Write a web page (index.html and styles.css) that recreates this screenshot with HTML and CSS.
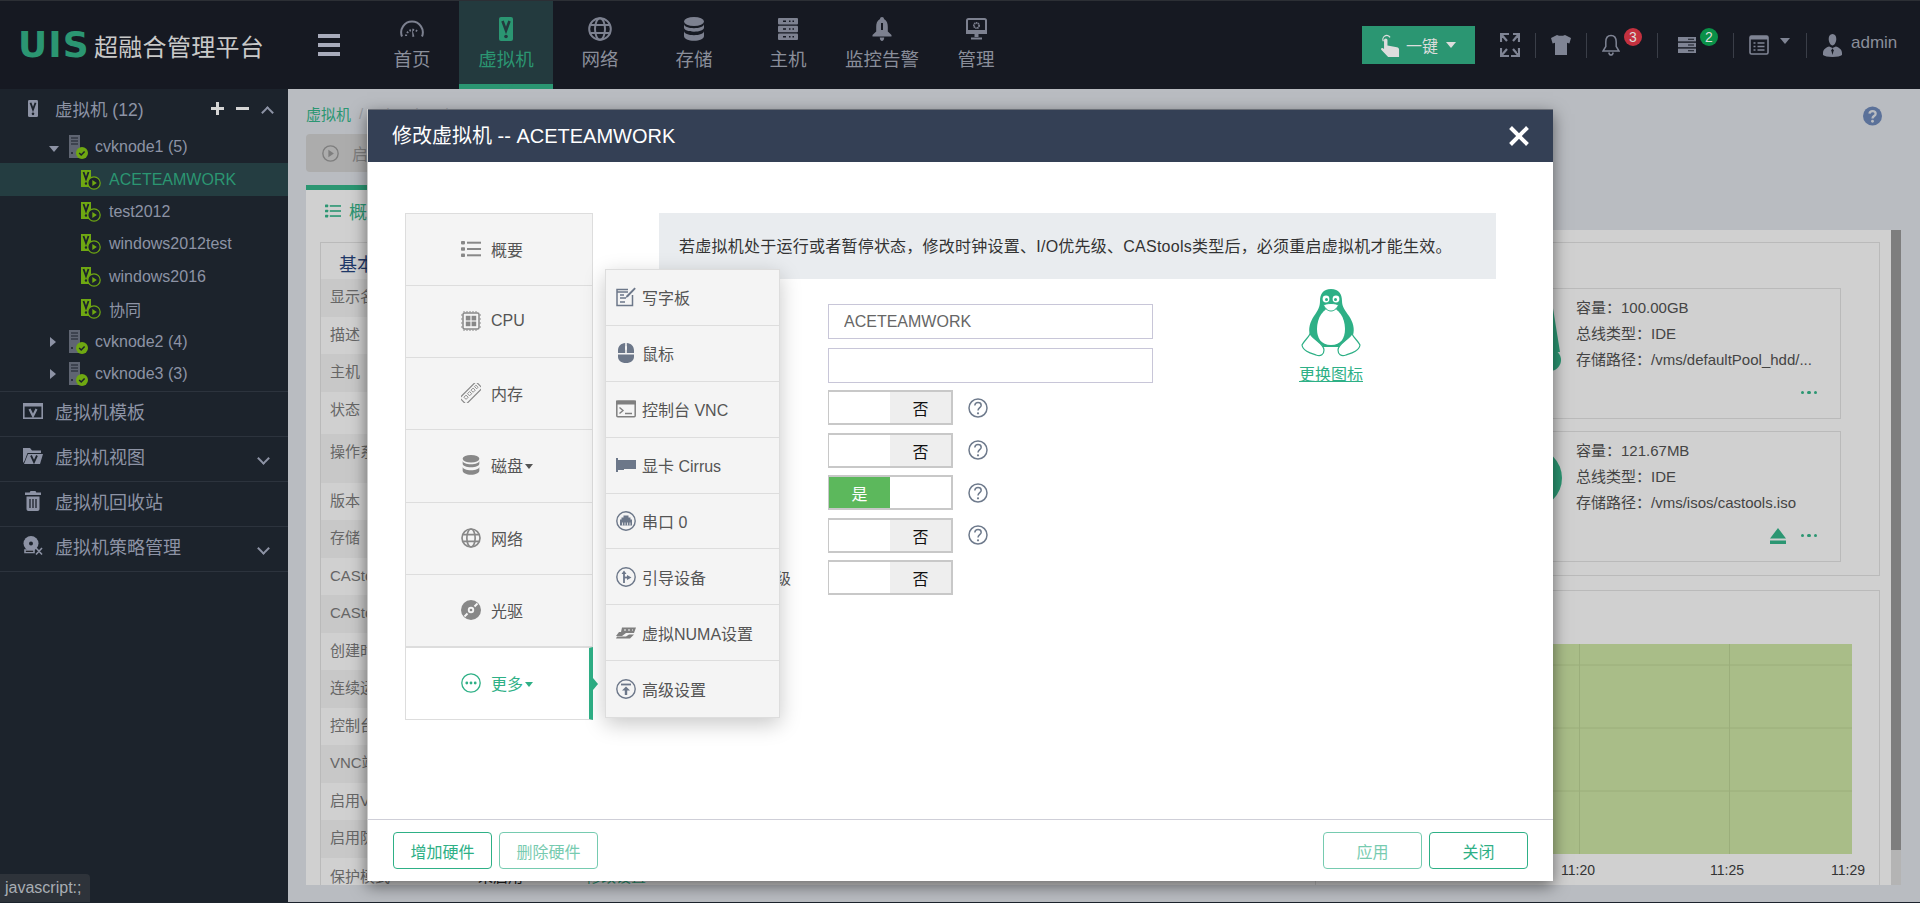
FILE: index.html
```html
<!DOCTYPE html>
<html lang="zh-CN">
<head>
<meta charset="utf-8">
<title>UIS 超融合管理平台</title>
<link rel="stylesheet" href="styles.css">
</head>
<body>
<svg class="defs" width="0" height="0" aria-hidden="true">
  <symbol id="s-vm" viewBox="0 0 14 24"><rect x="0" y="0" width="14" height="24" rx="2" fill="currentColor"/><polyline points="3.5,4 7,13.5 10.5,4" fill="none" stroke="var(--cut)" stroke-width="2.6"/><circle cx="7" cy="19.5" r="1.8" fill="var(--cut)"/></symbol>
  <symbol id="s-gauge" viewBox="0 0 24 16"><path d="M2 15.5A10.8 10.8 0 1 1 22 15.5" fill="none" stroke="currentColor" stroke-width="2"/><path d="M6 15A7 7 0 0 1 18 11" fill="none" stroke="currentColor" stroke-width="2" stroke-dasharray="1.6 1.6"/><path d="M12 7l2.4 8.500-2 .5z" fill="currentColor"/></symbol>
  <symbol id="s-globe" viewBox="0 0 24 24"><g fill="none" stroke="currentColor" stroke-width="2"><circle cx="12" cy="12" r="10.800"/><ellipse cx="12" cy="12" rx="5" ry="10.800"/><path d="M2.500 8h19M2.500 16h19"/></g></symbol>
  <symbol id="s-db" viewBox="0 0 20 24"><g fill="currentColor"><ellipse cx="10" cy="4.500" rx="10" ry="4.500"/><path d="M0 7v3.500c0 2.500 4.500 4.200 10 4.200s10-1.700 10-4.200V7c0 2.500-4.500 4.200-10 4.200S0 9.500 0 7z"/><path d="M0 14v5c0 2.800 4.500 4.800 10 4.800s10-2 10-4.800v-5c0 2.500-4.500 4.200-10 4.200S0 16.500 0 14z"/></g></symbol>
  <symbol id="s-server" viewBox="0 0 20 22"><g fill="currentColor"><rect width="20" height="6.400" rx="1"/><rect y="7.800" width="20" height="6.400" rx="1"/><rect y="15.600" width="20" height="6.400" rx="1"/></g><path d="M5 3.200h3M11 3.200h1.500M14.500 3.200h1.500M5 11h3M11 11h1.500M14.500 11h1.500M5 18.800h3M11 18.800h1.500M14.500 18.800h1.500" stroke="var(--cut)" stroke-width="1.600"/></symbol>
  <symbol id="s-bellf" viewBox="0 0 20 24"><path fill="currentColor" d="M10 0c1.200 0 2 .9 2 2 3 1.700 3.800 4.500 3.800 8v4.500L19.500 18v1.500h-19V18l3.700-3.500V10c0-3.500.8-6.300 3.800-8 0-1.100.8-2 2-2zM7.800 20.500h4.400c0 2-1 3.500-2.200 3.500s-2.200-1.500-2.200-3.500z"/><rect x="9" y="6" width="2" height="7" fill="var(--cut)"/></symbol>
  <symbol id="s-monitor" viewBox="0 0 21 22"><rect x="1" y="1" width="19" height="14" rx="1.500" fill="none" stroke="currentColor" stroke-width="2"/><rect y="12" width="21" height="4" fill="currentColor"/><rect x="8.500" y="16" width="4" height="3" fill="currentColor"/><rect x="5" y="19.500" width="11" height="2" fill="currentColor"/><circle cx="10.500" cy="7.500" r="2.600" fill="none" stroke="currentColor" stroke-width="1.800" stroke-dasharray="1.400 .5"/></symbol>
  <symbol id="s-hand" viewBox="0 0 20 24"><g fill="none" stroke="currentColor" stroke-width="1.300"><path d="M2.500 7.500a4 4 0 0 1 7-4"/></g><path fill="currentColor" d="M5 4.500c1 0 1.800.8 1.800 1.800V12l10 1.800c1.300.3 2.200 1.300 2.200 2.500V24H7.500L.3 16.500c-.8-1 .5-2.400 1.700-1.600l1.200.9V6.300c0-1 .8-1.800 1.800-1.800z"/></symbol>
  <symbol id="s-expand" viewBox="0 0 20 24"><path d="M1 9V1h8M19 9V1h-6M1 15v8h8M19 15v8h-8M1 1l6 7M19 1l-6 7M1 23l6-7M19 23l-6-7" fill="none" stroke="currentColor" stroke-width="2.200"/></symbol>
  <symbol id="s-shirt" viewBox="0 0 20 20"><path fill="currentColor" d="M6 0l2 .8h4L14 0l6 3-1.600 5.600-2.400-.8V20H4V7.800l-2.400.8L0 3z"/></symbol>
  <symbol id="s-bell" viewBox="0 0 18 22"><path d="M9 1.500c-3.700 0-5.200 3-5.200 6.500v4.500L1 17h16l-2.800-4.500V8c0-3.500-1.500-6.500-5.200-6.500zM6.800 18.500c.3 1.700 1.200 2.500 2.200 2.500s1.900-.8 2.200-2.500" fill="none" stroke="currentColor" stroke-width="1.500"/></symbol>
  <symbol id="s-stack" viewBox="0 0 18 16"><g fill="currentColor"><rect width="18" height="4.400"/><rect y="5.800" width="18" height="4.400"/><rect y="11.600" width="18" height="4.400"/></g><path d="M10 2.200h6M10 8h6M10 13.800h6" stroke="var(--cut)" stroke-width="1.100"/></symbol>
  <symbol id="s-winlist" viewBox="0 0 20 20"><rect x="1" y="1" width="18" height="18" rx="1.500" fill="none" stroke="currentColor" stroke-width="1.600"/><rect x="1" y="1" width="18" height="3.500" fill="currentColor"/><path d="M4.500 8h2M8.500 8h7M4.500 11.500h2M8.500 11.500h7M4.500 15h2M8.500 15h7" stroke="currentColor" stroke-width="1.300"/></symbol>
  <symbol id="s-user" viewBox="0 0 20 24"><path fill="currentColor" d="M10 0c2.800 0 4 2.300 4 5.200S12.200 12 10 12 6 8.100 6 5.200 7.200 0 10 0zM6.500 13l3.500 1.500L13.500 13c3 .8 6.500 3 6.500 7v2c-1.500 1.300-5 2-10 2s-8.500-.7-10-2v-2c0-4 3.500-6.200 6.500-7z"/><path d="M10 15l-1.300 2 1.300 5 1.300-5z" fill="var(--cut)"/></symbol>
  <symbol id="s-help-f" viewBox="0 0 20 20"><circle cx="10" cy="10" r="10" fill="currentColor"/><path d="M6.800 7.500C7 5.500 8.300 4.800 10 4.800c1.900 0 3.300 1 3.300 2.700 0 2.500-3.300 2.500-3.300 5" fill="none" stroke="#b9bcc1" stroke-width="2.400"/><circle cx="10" cy="15.500" r="1.500" fill="#b9bcc1"/></symbol>
  <symbol id="s-play" viewBox="0 0 20 20"><circle cx="10" cy="10" r="9" fill="none" stroke="currentColor" stroke-width="1.600"/><path d="M7.500 5.500l6.500 4.500-6.500 4.500z" fill="currentColor"/></symbol>
  <symbol id="s-node" viewBox="0 0 20 24"><path fill="currentColor" d="M1 0h11v23H1z"/><path d="M3 3h7M3 6h7M3 9h7" stroke="var(--cut)" stroke-width="1.200"/><circle cx="4" cy="18" r="1" fill="var(--cut)"/><circle cx="14" cy="18" r="6" fill="#6fa812"/><path d="M11.200 18l2 2 3.400-3.600" fill="none" stroke="#1c232c" stroke-width="1.500"/></symbol>
  <symbol id="s-leaf" viewBox="0 0 20 20"><rect width="10" height="17" fill="#6fa812"/><polyline points="2.500,2 5,9 7.500,2" fill="none" stroke="#1c232c" stroke-width="1.800"/><circle cx="5" cy="13.500" r="1.200" fill="#1c232c"/><circle cx="13" cy="13" r="6.200" fill="#1c232c" stroke="#6fa812" stroke-width="1.200"/><path d="M11.300 10l4.500 3-4.500 3z" fill="#6fa812"/></symbol>
  <symbol id="s-tpl" viewBox="0 0 20 16"><rect x=".8" y=".8" width="18.400" height="14.400" fill="none" stroke="currentColor" stroke-width="1.600"/><rect y="0" width="20" height="3.500" fill="currentColor"/><polyline points="6.500,6 10,13 13.500,6" fill="none" stroke="currentColor" stroke-width="2.200"/></symbol>
  <symbol id="s-folder" viewBox="0 0 20 16"><path fill="currentColor" d="M0 0h7l2 2.500h9V5H4.500L1.500 13 0 15z"/><path fill="currentColor" d="M5 6h15l-3 10H1z"/><polyline points="8,7.500 11,14 14,7.500" fill="none" stroke="#1c232c" stroke-width="1.800"/></symbol>
  <symbol id="s-trash" viewBox="0 0 16 20"><path fill="currentColor" d="M5.500 0h5l.8 1.500H16v2.500H0V1.500h4.700zM1.500 5.500h13V18c0 1.200-.8 2-2 2h-9c-1.200 0-2-.8-2-2z"/><path d="M5 8v9M8 8v9M11 8v9" stroke="#1c232c" stroke-width="1.300"/></symbol>
  <symbol id="s-policy" viewBox="0 0 20 20"><circle cx="8" cy="7.500" r="7.500" fill="currentColor"/><circle cx="8" cy="7.500" r="2" fill="#1c232c"/><path d="M2 14h9v2.500H2zM13 12l6 6.500M19 12l-6 6.500" stroke="currentColor" stroke-width="1.600"/></symbol>
  <symbol id="s-list" viewBox="0 0 20 16"><g fill="currentColor"><rect y="0" width="4" height="3.400" rx=".8"/><rect y="6.300" width="4" height="3.400" rx=".8"/><rect y="12.600" width="4" height="3.400" rx=".8"/><rect x="6" y=".7" width="14" height="2"/><rect x="6" y="7" width="14" height="2"/><rect x="6" y="13.300" width="14" height="2"/></g></symbol>
  <symbol id="s-cpu" viewBox="0 0 20 20"><rect x="2" y="2" width="16" height="16" rx="1.500" fill="none" stroke="currentColor" stroke-width="1.500"/><g fill="currentColor"><rect x="4.800" y="4.800" width="4.600" height="4.600"/><rect x="10.600" y="4.800" width="4.600" height="4.600"/><rect x="4.800" y="10.600" width="4.600" height="4.600"/><rect x="10.600" y="10.600" width="4.600" height="4.600"/></g><path d="M3 0v1.500M6 0v1.500M9 0v1.500M12 0v1.500M15 0v1.500M3 18.500v1.500M6 18.500v1.500M9 18.500v1.500M12 18.500v1.500M15 18.500v1.500M0 4h1.500M0 8h1.500M0 12h1.500M0 16h1.500M18.500 4h1.500M18.500 8h1.500M18.500 12h1.500M18.500 16h1.500" stroke="currentColor"/></symbol>
  <symbol id="s-mem" viewBox="0 0 20 20"><g transform="rotate(-45 10 10)"><rect x="-1.500" y="5.500" width="23" height="9" fill="none" stroke="currentColor" stroke-width="1.200"/><path d="M2 8h3v3H2zM7 8h3v3H7zM12 8h3v3h-3zM17 8h2v3h-2z" fill="none" stroke="currentColor" stroke-width=".9"/></g></symbol>
  <symbol id="s-cd" viewBox="0 0 20 20"><circle cx="10" cy="10" r="10" fill="currentColor"/><circle cx="10" cy="10" r="3.200" fill="#f4f4f4"/><circle cx="10" cy="10" r="1.300" fill="currentColor"/><path d="M13.500 6.500l3-3M6.500 13.500l-3 3" stroke="#f4f4f4" stroke-width="2"/></symbol>
  <symbol id="s-more" viewBox="0 0 20 20"><circle cx="10" cy="10" r="9.200" fill="none" stroke="currentColor" stroke-width="1.300"/><circle cx="5.800" cy="10" r="1.400" fill="currentColor"/><circle cx="10" cy="10" r="1.400" fill="currentColor"/><circle cx="14.200" cy="10" r="1.400" fill="currentColor"/></symbol>
  <symbol id="s-edit" viewBox="0 0 20 20"><path d="M16.500 8v10.500h-15.500v-16h11" fill="none" stroke="currentColor" stroke-width="1.500"/><path d="M1 5h11" stroke="currentColor" stroke-width="1.500"/><path d="M4 8h4M4 11h6M4 15h5" stroke="currentColor" stroke-width="1.400"/><path d="M18.500 .5l1.300 1.300-7.800 8.200-2.500 1 1-2.500z" fill="currentColor"/></symbol>
  <symbol id="s-mouse" viewBox="0 0 16 20"><path fill="currentColor" d="M0 11.500h16v2c0 4-3 6.500-8 6.500s-8-2.500-8-6.500zM7.200 0v10H0V7.500C0 3 3 .3 7.200 0zM8.800 0C13 .3 16 3 16 7.500V10H8.800z"/><rect x="7" y="3" width="2" height="4" rx="1" fill="#f4f4f4"/></symbol>
  <symbol id="s-console" viewBox="0 0 20 17"><rect x=".8" y=".8" width="18.400" height="15.400" rx="1" fill="none" stroke="currentColor" stroke-width="1.500"/><rect width="20" height="4" fill="currentColor"/><path d="M3.500 7l3.500 3-3.500 3M9 13h7" fill="none" stroke="currentColor" stroke-width="1.400"/></symbol>
  <symbol id="s-gpu" viewBox="0 0 20 14"><path fill="currentColor" d="M0 0h2v2h18v9H8v1H2v2H0z"/></symbol>
  <symbol id="s-serial" viewBox="0 0 20 20"><circle cx="10" cy="10" r="9.200" fill="none" stroke="currentColor" stroke-width="1.400"/><path fill="currentColor" d="M7.500 4.500h5v2h2v2h1.500v6h-12v-6h1.500v-2h2z"/><path d="M6.500 11.500v3M9 11.500v3M11.500 11.500v3M14 11.500v3" stroke="#f4f4f4" stroke-width=".8"/></symbol>
  <symbol id="s-boot" viewBox="0 0 20 20"><circle cx="10" cy="10" r="9.200" fill="none" stroke="currentColor" stroke-width="1.400"/><path d="M8 16V6" stroke="currentColor" stroke-width="1.800"/><path d="M8 3.500L5.500 7h5zM15.500 10.500L11 8v5z" fill="currentColor"/><path d="M8 10.500h4" stroke="currentColor" stroke-width="1.800"/></symbol>
  <symbol id="s-numa" viewBox="0 0 20 11"><path fill="currentColor" d="M6 0h14l-2 5.500H10L6 8.500H0l3-4h2zM1 9h9l3-2h5l-4 4H0z"/><path d="M8 2.500h2M12 2.500h2M16 2.500h1" stroke="#f4f4f4" stroke-width="1.200"/></symbol>
  <symbol id="s-adv" viewBox="0 0 20 20"><circle cx="10" cy="10" r="9.200" fill="none" stroke="currentColor" stroke-width="1.400"/><path d="M5 5.500h10" stroke="currentColor" stroke-width="1.800"/><path d="M10 7.500l4 4h-2.800V16H8.800v-4.500H6z" fill="currentColor"/></symbol>
  <symbol id="s-help" viewBox="0 0 20 20"><circle cx="10" cy="10" r="9" fill="none" stroke="currentColor" stroke-width="1.500"/><path d="M6.800 7.500C7 5.500 8.300 4.500 10 4.500c1.800 0 3.200 1 3.200 2.700 0 2.400-3.200 2.600-3.200 5.300" fill="none" stroke="currentColor" stroke-width="1.500"/><circle cx="10" cy="15.300" r="1.100" fill="currentColor"/></symbol>
  <symbol id="s-tux" viewBox="0 0 60 68"><path fill="currentColor" d="M30 0c-8 0-11 5-11 12 0 6-2 9-6 15-4 6-6 13-4 19l2 12h38l3-12c2-6 0-13-4-19-4-6-7-9-7-15 0-7-3-12-11-12z"/><path d="M30 19c-7 0-14 9-14 21 0 9 4 16 14 16s14-7 14-16c0-12-7-21-14-21z" fill="#fff"/><circle cx="25" cy="10" r="3.400" fill="#fff"/><circle cx="35" cy="10" r="3.400" fill="#fff"/><circle cx="25.500" cy="10.500" r="1.500" fill="currentColor"/><circle cx="34.500" cy="10.500" r="1.500" fill="currentColor"/><path d="M22.500 16c3-2 12-2 15 0-2 4-4.500 6-7.500 6s-5.500-2-7.500-6z" fill="#fff" stroke="currentColor"/><path d="M9 45c-2 4-6 7-8 11 1 6 8 8 14 10 5 2 8-1 8-5 0-6-10-10-14-16zM51 45c-4 6-14 10-14 16 0 4 3 7 8 5 6-2 13-4 14-10-2-4-6-7-8-11z" fill="#fff" stroke="currentColor" stroke-width="1.200"/></symbol>
  <symbol id="s-eject" viewBox="0 0 16 16"><path d="M8 0l8 10.500H0zM0 12.500h16V16H0z" fill="currentColor"/></symbol>
</svg>

<div class="app">
  <header class="topbar">
    <div class="logo"><span class="logo-mark">UIS</span><span class="logo-text">超融合管理平台</span></div>
    <button class="hamburger" aria-label="菜单"><i></i><i></i><i></i></button>
    <nav class="nav">
      <a class="nav-item"><svg class="ni w24"><use href="#s-gauge"/></svg><span>首页</span></a>
      <a class="nav-item active"><svg class="ni w14"><use href="#s-vm"/></svg><span>虚拟机</span></a>
      <a class="nav-item"><svg class="ni w24"><use href="#s-globe"/></svg><span>网络</span></a>
      <a class="nav-item"><svg class="ni w20"><use href="#s-db"/></svg><span>存储</span></a>
      <a class="nav-item"><svg class="ni w20"><use href="#s-server"/></svg><span>主机</span></a>
      <a class="nav-item"><svg class="ni w20"><use href="#s-bellf"/></svg><span>监控告警</span></a>
      <a class="nav-item"><svg class="ni w21"><use href="#s-monitor"/></svg><span>管理</span></a>
    </nav>
    <div class="tools">
      <button class="onekey"><svg class="hand"><use href="#s-hand"/></svg><span>一键</span><i class="caret"></i></button>
      <div class="tool t1"><svg class="ti-expand"><use href="#s-expand"/></svg></div>
      <div class="tool t2"><svg class="ti-shirt"><use href="#s-shirt"/></svg></div>
      <div class="tool t3"><svg class="ti-bell"><use href="#s-bell"/></svg><b class="badge red">3</b></div>
      <div class="tool t4"><svg class="ti-stack"><use href="#s-stack"/></svg><b class="badge green">2</b></div>
      <div class="tool t5"><svg class="ti-win"><use href="#s-winlist"/></svg><i class="caret grey"></i></div>
      <div class="tool t6"><svg class="ti-user"><use href="#s-user"/></svg><span class="admin">admin</span></div>
    </div>
  </header>

  <div class="shell">
    <aside class="sidebar">
      <div class="side-head">
        <svg class="sh-vm"><use href="#s-vm"/></svg><span class="side-title">虚拟机 (12)</span>
        <span class="side-actions"><i class="plus"></i><i class="minus"></i><i class="chev up"></i></span>
      </div>
      <ul class="tree">
        <li class="tn node"><i class="tri down"></i><svg class="nd"><use href="#s-node"/></svg><span>cvknode1 (5)</span></li>
        <li class="tn leaf selected"><svg class="lf"><use href="#s-leaf"/></svg><span>ACETEAMWORK</span></li>
        <li class="tn leaf"><svg class="lf"><use href="#s-leaf"/></svg><span>test2012</span></li>
        <li class="tn leaf"><svg class="lf"><use href="#s-leaf"/></svg><span>windows2012test</span></li>
        <li class="tn leaf"><svg class="lf"><use href="#s-leaf"/></svg><span>windows2016</span></li>
        <li class="tn leaf"><svg class="lf"><use href="#s-leaf"/></svg><span>协同</span></li>
        <li class="tn node"><i class="tri right"></i><svg class="nd"><use href="#s-node"/></svg><span>cvknode2 (4)</span></li>
        <li class="tn node"><i class="tri right"></i><svg class="nd"><use href="#s-node"/></svg><span>cvknode3 (3)</span></li>
      </ul>
      <div class="side-sec"><svg class="si"><use href="#s-tpl"/></svg><span>虚拟机模板</span></div>
      <div class="side-sec"><svg class="si"><use href="#s-folder"/></svg><span>虚拟机视图</span><i class="chev down"></i></div>
      <div class="side-sec"><svg class="si"><use href="#s-trash"/></svg><span>虚拟机回收站</span></div>
      <div class="side-sec"><svg class="si"><use href="#s-policy"/></svg><span>虚拟机策略管理</span><i class="chev down"></i></div>
    </aside>

    <main class="main">
      <div class="crumb"><a>虚拟机</a><span>/</span><span>cvknode1</span><span>/</span><span>ACETEAMWORK</span></div>
      <div class="toolbar"><svg class="play"><use href="#s-play"/></svg><span>启动</span></div>
      <div class="tabline"><svg class="tab-ic"><use href="#s-list"/></svg><span>概要</span></div>
      <div class="panel">
        <div class="basic">
          <div class="basic-head">基本属性</div>
          <div class="trow">显示名称</div>
          <div class="trow">描述</div>
          <div class="trow">主机</div>
          <div class="trow tall">状态</div>
          <div class="trow taller">操作系统</div>
          <div class="trow">版本</div>
          <div class="trow">存储</div>
          <div class="trow">CAStools版本</div>
          <div class="trow">CAStools状态</div>
          <div class="trow">创建时间</div>
          <div class="trow">连续运行时间</div>
          <div class="trow">控制台端口</div>
          <div class="trow">VNC端口</div>
          <div class="trow">启用VNC代理</div>
          <div class="trow">启用防病毒</div>
          <div class="trow last"><span class="tl">保护模式</span><span class="tv">未启用</span><a class="tg">修改设置</a></div>
        </div>
        <div class="rightcol">
          <section class="box disks">
            <div class="disk">
              <svg class="disk-ic" viewBox="0 0 60 70"><path d="M10 0h40l8 50H2z" fill="currentColor"/><circle cx="48" cy="58" r="11" fill="currentColor"/><circle cx="48" cy="58" r="3" fill="#d0d0d0"/></svg>
              <div class="disk-info"><p>容量：100.00GB</p><p>总线类型：IDE</p><p>存储路径：/vms/defaultPool_hdd/...</p></div>
              <span class="dots"><i></i><i></i><i></i></span>
            </div>
            <div class="disk">
              <svg class="disk-ic" viewBox="0 0 60 70"><circle cx="30" cy="33" r="30" fill="currentColor"/></svg>
              <div class="disk-info"><p>容量：121.67MB</p><p>总线类型：IDE</p><p>存储路径：/vms/isos/castools.iso</p></div>
              <svg class="eject"><use href="#s-eject"/></svg>
              <span class="dots"><i></i><i></i><i></i></span>
            </div>
          </section>
          <section class="box chart-box">
            <svg class="chart" width="451" height="210" viewBox="0 0 451 210">
              <rect width="451" height="210" fill="#a9bd88"/>
              <path d="M0 21h451M0 84h451M0 147h451M178.500 0v210M328.500 0v210" stroke="#9bae7b"/>
            </svg>
            <div class="ticks"><span>11:20</span><span class="t25">11:25</span><span class="t29">11:29</span></div>
          </section>
        </div>
        <div class="scroll"><i></i></div>
      </div>
      <a class="help-top"><svg><use href="#s-help-f"/></svg></a>
    </main>
  </div>

  <div class="modal">
    <div class="modal-head"><h2>修改虚拟机 -- ACETEAMWORK</h2><span class="x"></span></div>
    <div class="modal-body">
      <ul class="hw">
        <li><svg class="hi"><use href="#s-list"/></svg><span>概要</span></li>
        <li><svg class="hi"><use href="#s-cpu"/></svg><span>CPU</span></li>
        <li><svg class="hi"><use href="#s-mem"/></svg><span>内存</span></li>
        <li><svg class="hi"><use href="#s-db"/></svg><span>磁盘</span><i class="mini"></i></li>
        <li><svg class="hi"><use href="#s-globe"/></svg><span>网络</span></li>
        <li><svg class="hi"><use href="#s-cd"/></svg><span>光驱</span></li>
        <li class="on"><svg class="hi"><use href="#s-more"/></svg><span>更多</span><i class="mini"></i></li>
      </ul>
      <div class="content">
        <div class="notice">若虚拟机处于运行或者暂停状态，修改时钟设置、I/O优先级、CAStools类型后，必须重启虚拟机才能生效。</div>
        <div class="form-wrap">
          <div class="form">
            <div class="row r-input"><span class="lbl"></span><input class="txt" value="ACETEAMWORK"></div>
            <div class="row r-input2"><span class="lbl"></span><input class="txt" value=""></div>
            <div class="row"><span class="lbl"></span><div class="sw"><i></i><b>否</b></div><svg class="q"><use href="#s-help"/></svg></div>
            <div class="row"><span class="lbl"></span><div class="sw"><i></i><b>否</b></div><svg class="q"><use href="#s-help"/></svg></div>
            <div class="row"><span class="lbl"></span><div class="sw yes"><b>是</b><i></i></div><svg class="q"><use href="#s-help"/></svg></div>
            <div class="row"><span class="lbl"></span><div class="sw"><i></i><b>否</b></div><svg class="q"><use href="#s-help"/></svg></div>
            <div class="row"><span class="lbl">I/O优先级</span><div class="sw"><i></i><b>否</b></div></div>
          </div>
          <div class="os"><svg class="tux"><use href="#s-tux"/></svg><a class="change">更换图标</a></div>
        </div>
      </div>
      <ul class="pop">
        <li><svg class="pi"><use href="#s-edit"/></svg><span>写字板</span></li>
        <li><svg class="pi"><use href="#s-mouse"/></svg><span>鼠标</span></li>
        <li><svg class="pi grey"><use href="#s-console"/></svg><span>控制台 VNC</span></li>
        <li><svg class="pi"><use href="#s-gpu"/></svg><span>显卡 Cirrus</span></li>
        <li><svg class="pi"><use href="#s-serial"/></svg><span>串口 0</span></li>
        <li><svg class="pi"><use href="#s-boot"/></svg><span>引导设备</span></li>
        <li><svg class="pi grey"><use href="#s-numa"/></svg><span>虚拟NUMA设置</span></li>
        <li><svg class="pi"><use href="#s-adv"/></svg><span>高级设置</span></li>
      </ul>
    </div>
    <div class="modal-foot">
      <button class="btn">增加硬件</button>
      <button class="btn off">删除硬件</button>
      <button class="btn off push">应用</button>
      <button class="btn">关闭</button>
    </div>
  </div>

  <div class="status">javascript:;</div>
</div>
</body>
</html>
```
FILE: styles.css
```css
* { box-sizing: border-box; }
html, body { margin: 0; height: 100%; overflow: hidden; }
body { font-family: "Liberation Sans", "Noto Sans CJK SC", sans-serif; font-size: 16px; background: #b9bcc1; color: #555; }
ul { list-style: none; margin: 0; padding: 0; }
p { margin: 0; }
button { font-family: inherit; cursor: pointer; }
i { display: block; font-style: normal; }
.defs { position: absolute; }
.app { position: relative; display: flex; flex-direction: column; height: 903px; border-bottom: 1px solid #1c232c; }

/* top bar */
.topbar { flex: 0 0 89px; display: flex; background: #161922; border-top: 1px solid #2c2f35; --cut: #161922; }
.logo { display: flex; align-items: center; width: 318px; padding-left: 18px; }
.logo-mark { font-family: "DejaVu Sans", sans-serif; font-weight: 700; font-size: 36px; line-height: 40px; letter-spacing: 1px; color: #2b9672; width: 76px; }
.logo-text { font-size: 24px; letter-spacing: .3px; color: #c9c9c9; white-space: nowrap; }
.hamburger { width: 47px; height: 88px; padding: 0; background: none; border: 0; display: flex; flex-direction: column; gap: 5px; justify-content: center; }
.hamburger i { width: 22px; height: 4px; background: #a8abbb; }
.nav { display: flex; }
.nav-item { position: relative; width: 94px; height: 88px; display: flex; flex-direction: column; align-items: center; padding-top: 16px; color: #7d8190; }
.nav-item span { font-size: 18.500px; line-height: 24px; margin-top: 7px; white-space: nowrap; color: #8a8e9a; }
.ni { height: 24px; display: block; }
.w24 { width: 24px; } .w14 { width: 14px; } .w20 { width: 20px; } .w21 { width: 21px; }
.nav-item.active { background: #233a3e; border-bottom: 5px solid #2b9672; color: #2b9672; --cut: #233a3e; }
.nav-item.active span { color: #2b9672; }
.nav-item.active::after { content: ""; position: absolute; left: 40px; top: 83px; border: 7px solid transparent; border-top: 8px solid #2b9672; border-bottom: 0; }
.tools { margin-left: auto; display: flex; align-items: center; }
.onekey { width: 113px; height: 38px; margin-right: 12px; display: flex; align-items: center; padding: 0 0 0 19px; background: #2b9672; border: 0; color: #ddd; font-size: 16px; }
.hand { width: 19px; height: 23px; margin-right: 6px; }
.caret { width: 0; height: 0; border: 5px solid transparent; border-top: 6px solid #ddd; border-bottom: 0; margin-left: 8px; }
.caret.grey { border-top-color: #7f8494; margin: -8px 0 0 11px; }
.tool { position: relative; height: 25px; display: flex; align-items: center; border-right: 1px solid #3a3e48; color: #7f8494; }
.t1 { width: 49px; padding-left: 13px; }
.t2 { width: 51px; padding-left: 15px; }
.t3 { width: 71px; padding-left: 15px; }
.t4 { width: 76px; padding-left: 20px; }
.t5 { width: 73px; padding-left: 15px; }
.t6 { width: 113px; padding-left: 16px; border-right: 0; }
.ti-expand { width: 20px; height: 24px; }
.ti-shirt { width: 20px; height: 20px; }
.ti-bell { width: 18px; height: 22px; }
.ti-stack { width: 18px; height: 16px; }
.ti-win { width: 20px; height: 20px; }
.ti-user { width: 19px; height: 23px; }
.admin { margin-left: 9px; font-size: 17px; color: #8a8e9a; margin-top: -4px; }
.badge { position: absolute; top: -5px; width: 18px; height: 18px; border-radius: 50%; color: #ddd; font-weight: 400; font-size: 14px; line-height: 18px; text-align: center; }
.badge.red { left: 37px; background: #c4313f; }
.badge.green { left: 42px; background: #0a9048; }

/* shell */
.shell { flex: 1; display: flex; min-height: 0; }
.sidebar { width: 288px; background: #1c232c; color: #8d93a5; --cut: #1c232c; }
.side-head { height: 42px; display: flex; align-items: center; padding: 0 0 3px 28px; }
.sh-vm { width: 10px; height: 19px; color: #8d93a5; margin-right: 17px; }
.side-title { font-size: 17.500px; white-space: nowrap; }
.side-actions { margin-left: auto; display: flex; align-items: center; padding-right: 16px; }
.plus { position: relative; width: 13px; height: 13px; background: linear-gradient(#d5d5d5,#d5d5d5) center/13px 3px no-repeat, linear-gradient(#d5d5d5,#d5d5d5) center/3px 13px no-repeat; margin-right: 12px; }
.minus { width: 13px; height: 3px; background: #d5d5d5; margin-right: 14px; }
.chev { width: 9px; height: 9px; border: solid #8d93a5; border-width: 2px 0 0 2px; }
.chev.up { transform: rotate(45deg); margin-top: 7px; }
.chev.down { transform: rotate(225deg); margin: 4px 20px 0 auto; }
.tree { height: 261px; border-bottom: 1px solid #2c333d; }
.tn { height: 32.400px; display: flex; align-items: center; font-size: 16px; white-space: nowrap; }
.tri { width: 0; height: 0; border: 5px solid transparent; }
.tri.down { border-top: 6px solid #8d93a5; border-bottom: 0; margin: 3px 9px 0 49px; }
.tri.right { border-left: 6px solid #8d93a5; border-right: 0; margin: 0 12px 0 50px; }
.nd { width: 20px; height: 24px; color: #5f6572; margin-right: 7px; }
.leaf { padding-left: 81px; }
.lf { width: 20px; height: 20px; margin-right: 8px; }
.selected { background: #243d41; color: #2b9672; }
.side-sec { height: 45px; display: flex; align-items: center; padding: 0 0 6px 23px; border-bottom: 1px solid #2c333d; font-size: 18px; white-space: nowrap; }
.si { width: 20px; height: 20px; margin-right: 12px; }
.side-sec .chev { margin-left: auto; }

.main { position: relative; flex: 1; min-width: 0; padding: 0 19px 0 18px; background: #b9bcc1; overflow: hidden; }
.crumb { height: 45px; display: flex; gap: 8px; align-items: center; font-size: 15px; padding-top: 3px; color: #9a9da2; }
.crumb a { color: #2b9672; }
.toolbar { height: 38px; width: 140px; display: flex; align-items: center; padding-left: 16px; background: #acacac; border-radius: 4px; color: #7e7e7e; font-size: 16px; }
.play { width: 17px; height: 17px; margin-right: 13px; }
.tabline { margin-top: 13px; width: 200px; height: 45px; display: flex; align-items: center; padding-left: 19px; padding-top: 2px; border-top: 5px solid #2b9672; background: #d0d0d0; color: #2b9672; font-size: 18px; }
.tab-ic { width: 16px; height: 14px; margin-right: 8px; }
.panel { height: 655px; display: flex; background: #d0d0d0; padding-left: 14px; overflow: hidden; }
.basic { width: 982px; padding-top: 12px; flex: none; }
.basic-head { height: 37px; padding: 5px 0 0 18px; border: solid #bababa; border-width: 1px 0 0 1px; color: #1f3868; font-size: 18px; line-height: 34px; }
.trow { height: 37.500px; padding-left: 9px; border-left: 1px solid #bababa; font-size: 15px; line-height: 35px; color: #666; white-space: nowrap; overflow: hidden; }
.trow:nth-of-type(even) { background: #c8c8c8; }
.trow.tall { height: 42px; }
.trow.taller { height: 49px; }
.trow.last { display: flex; line-height: 37px; }
.tl { width: 148px; } .tv { width: 108px; color: #222; } .tg { color: #2b9672; }
.rightcol { flex: none; width: 565px; margin-left: 13px; padding-top: 12px; }
.box { border: 1px solid #bababa; }
.disks { height: 334px; padding: 45px 38px 0 0; display: flex; flex-direction: column; gap: 12px; }
.disk { position: relative; height: 131px; display: flex; justify-content: flex-end; border: 1px solid #bababa; margin-left: 84px; color: #2b9672; }
.disk-ic { width: 60px; height: 70px; margin: 13px 14px 0 0; flex: none; }
.disk-info { width: 264px; padding-top: 6px; font-size: 15px; line-height: 26px; color: #444; white-space: nowrap; }
.dots { position: absolute; right: 23px; bottom: 24px; display: flex; gap: 3px; }
.dots i { width: 3.500px; height: 3.500px; border-radius: 50%; background: currentColor; }
.eject { position: absolute; right: 54px; bottom: 17px; width: 16px; height: 16px; }
.chart-box { margin-top: 14px; height: 340px; padding: 53px 0 0 0; }
.chart { display: block; margin-left: 85px; }
.ticks { display: flex; margin: 7px 0 0 245px; font-size: 14px; line-height: 18px; color: #333; }
.t25 { margin-left: 115px; }
.t29 { margin-left: 87px; }
.scroll { flex: none; width: 10px; margin-left: 11px; background: #b4b4b4; }
.scroll i { height: 620px; background: #7e7e7e; }
.help-top { position: absolute; left: 1575px; top: 17px; color: #5b7199; }
.help-top svg { display: block; width: 19px; height: 20px; }

/* modal */
.modal { position: absolute; left: 367px; top: 109px; width: 1186px; height: 772px; display: flex; flex-direction: column; background: #fff; border-left: 1px solid #ccc; box-shadow: 0 5px 15px rgba(0,0,0,.5); }
.modal-head { flex: 0 0 53px; display: flex; align-items: center; justify-content: space-between; padding: 0 24px 0 24px; background: #344055; border-top: 1px solid #6c7078; }
.modal-head h2 { margin: 0 0 4px; font-size: 20px; font-weight: 400; color: #fff; }
.x { position: relative; width: 20px; height: 20px; }
.x::before, .x::after { content: ""; position: absolute; left: 8px; top: -2px; width: 4px; height: 24px; background: #fff; transform: rotate(45deg); }
.x::after { transform: rotate(-45deg); }
.modal-body { position: relative; flex: 1; display: flex; padding: 51px 57px 0 37px; }
.hw { width: 188px; height: 507px; display: grid; grid-auto-rows: 1fr; border: 1px solid #ddd; background: #f4f4f4; flex: none; }
.hw li { position: relative; display: flex; align-items: center; padding: 0 0 1px 55px; font-size: 16px; color: #555; border-bottom: 1px solid #ddd; }
.hw li:last-child { border-bottom: 0; }
.hi { width: 20px; height: 20px; margin-right: 10px; color: #888; flex: none; }
.mini { width: 0; height: 0; border: 4.500px solid transparent; border-top: 5px solid currentColor; border-bottom: 0; margin: 3px 0 0 2px; }
.hw li.on { margin: 0 -1px -1px -1px; background: #fff; color: #2eb086; border: 1px solid #ddd; border-right: 4px solid #2eb086; }
.hw li.on .hi { color: #2eb086; }
.hw li.on::after { content: ""; position: absolute; right: -9px; top: 30px; border: 6px solid transparent; border-left: 5px solid #2eb086; border-right: 0; }
.content { margin-left: 66px; flex: 1; min-width: 0; }
.notice { height: 66px; display: flex; align-items: center; padding: 0 0 2px 20px; background: #e9ecef; color: #333; font-size: 16px; letter-spacing: .24px; white-space: nowrap; }
.form-wrap { display: flex; margin-top: 25px; }
.form { width: 639px; flex: none; }
.row { display: flex; align-items: center; height: 35px; margin-bottom: 7.500px; }
.r-input { margin-bottom: 9px; }
.r-input2 { margin-bottom: 7px; }
.lbl { flex: 0 0 132px; margin-right: 37px; text-align: right; font-size: 15px; color: #555; white-space: nowrap; }
.txt { width: 325px; height: 35px; border: 1.500px solid #c8c6d8; padding: 0 15px; font: 16px "Liberation Sans", sans-serif; color: #666; background: #fff; outline: 0; }
.sw { width: 125px; height: 35px; display: flex; border: solid #c8c8c8; border-width: 2px 2px 2px 1px; }
.sw i { width: 61px; background: #fff; }
.sw b { width: 61px; background: #eee; color: #111; font-weight: 400; font-size: 16px; line-height: 35px; text-align: center; }
.sw.yes b { background: #5cb85c; color: #fff; }
.q { width: 20px; height: 20px; margin-left: 15px; color: #6e7a8c; }
.os { margin: -15px 0 0 0; width: 66px; display: flex; flex-direction: column; align-items: center; color: #2eb086; }
.tux { width: 60px; height: 68px; display: block; }
.change { margin-top: 8px; font-size: 16px; line-height: 20px; white-space: nowrap; text-decoration: underline; }
.pop { position: absolute; left: 237px; top: 107px; width: 175px; height: 449px; display: grid; grid-auto-rows: 1fr; background: #f4f4f4; border: 1px solid #ddd; box-shadow: 0 6px 20px rgba(0,0,0,.22); }
.pop li { display: flex; align-items: center; padding-left: 10px; font-size: 16px; color: #555; border-bottom: 1px solid #ddd; white-space: nowrap; }
.pop li:last-child { border-bottom: 0; }
.pi { width: 20px; height: 20px; margin-right: 6px; color: #6c7789; flex: none; }
.pi.grey { color: #7f7f7f; }
.modal-foot { flex: 0 0 62px; display: flex; align-items: center; gap: 7px; padding: 0 25px; border-top: 1px solid #cfcfd8; }
.btn { width: 99px; height: 37px; padding: 0; background: #fff; border: 1px solid #2eb086; border-radius: 4px; color: #2eb086; font-size: 16px; }
.btn.off { opacity: .65; }
.push { margin-left: auto; }

.status { position: absolute; left: 0; bottom: 0; width: 90px; height: 28px; padding-left: 5px; background: #2e333a; border-top-right-radius: 4px; color: #a8adb3; font-size: 16px; line-height: 28px; white-space: nowrap; }
```
